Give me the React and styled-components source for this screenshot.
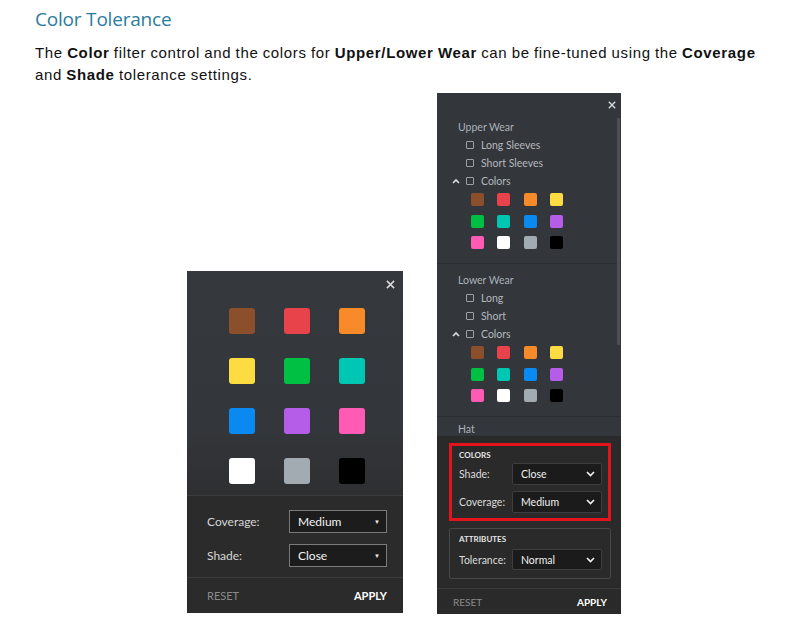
import React from "react";
import styled, { createGlobalStyle } from "styled-components";

const SWATCHES = [
  "#8b502b",
  "#e8424a",
  "#f88a2a",
  "#fcdc40",
  "#00c043",
  "#00c6b4",
  "#0a89f1",
  "#b55ce8",
  "#ff5bb5",
  "#ffffff",
  "#a2aab2",
  "#000000",
];

const GlobalStyle = createGlobalStyle`
  body {
    margin: 0;
    background: #ffffff;
  }
`;

const Page = styled.div`
  width: 808px;
  height: 624px;
  box-sizing: border-box;
  padding: 7px 0 0 35px;
  overflow: hidden;
`;

const Title = styled.h2`
  margin: 0;
  font-family: "Open Sans", "Liberation Sans", sans-serif;
  font-weight: 400;
  font-size: 19px;
  line-height: 24px;
  letter-spacing: -0.2px;
  color: #2b7c9d;
`;

const Lead = styled.p`
  margin: 11px 0 0;
  width: 732px;
  font-family: "Liberation Sans", Arial, sans-serif;
  font-size: 15px;
  line-height: 22px;
  letter-spacing: 0.65px;
  word-spacing: -0.5px;
  color: #111;

  b {
    font-weight: 700;
  }
`;

const Figures = styled.div`
  display: flex;
  align-items: flex-end;
  gap: 34px;
  margin: 7px 0 0 152px;
`;

/* ---------- shared bits ---------- */

const CloseIcon = ({ size = 9 }) => (
  <svg width={size} height={size} viewBox="0 0 10 10">
    <path d="M1 1L9 9M9 1L1 9" stroke="#d4d6d8" strokeWidth="1.8" />
  </svg>
);

const ChevronDown = () => (
  <svg width="9" height="6" viewBox="0 0 9 6">
    <path d="M1 1l3.5 3.5L8 1" fill="none" stroke="#f0f0f0" strokeWidth="1.7" />
  </svg>
);

const ChevronUp = () => (
  <svg width="8" height="6" viewBox="0 0 8 6">
    <path d="M1 5l3-3 3 3" fill="none" stroke="#d8dcdf" strokeWidth="1.7" />
  </svg>
);

const Swatch = styled.span`
  display: block;
  width: ${(p) => p.$size}px;
  height: ${(p) => p.$size}px;
  border-radius: ${(p) => (p.$size > 20 ? 3 : 2)}px;
  background: ${(p) => p.$color};
`;

const Footer = styled.div`
  display: flex;
  align-items: center;
  justify-content: space-between;
  height: ${(p) => p.$height}px;
  padding: 0 ${(p) => p.$right}px 0 ${(p) => p.$left}px;
  border-top: 1px solid #3b3b3b;
  font-family: Lato, "Liberation Sans", sans-serif;
  font-size: ${(p) => p.$font}px;
  text-transform: uppercase;
`;

const Reset = styled.span`
  color: #8a8a8a;
`;

const Apply = styled.span`
  color: #ffffff;
  font-weight: 700;
`;

/* ---------- compact colour picker ---------- */

const CompactPanel = styled.div`
  width: 216px;
  height: 342px;
  margin-bottom: 1px;
  display: flex;
  flex-direction: column;
  background: #2b2b2b;
`;

const CompactTop = styled.div`
  background: linear-gradient(#35383c, #33363a 70%, #2e2f31);
  padding-bottom: 11px;
`;

const CompactHead = styled.div`
  display: flex;
  justify-content: flex-end;
  align-items: flex-start;
  height: 37px;
  box-sizing: border-box;
  padding: 9px 8px 0;
`;

const BigGrid = styled.div`
  display: grid;
  grid-template-columns: repeat(3, 26px);
  column-gap: 29px;
  row-gap: 24px;
  justify-content: center;
  padding-left: 3px;
`;

const CompactControls = styled.div`
  display: flex;
  flex-direction: column;
  gap: 11px;
  padding: 14px 16px 10px 20px;
  border-top: 1px solid #3d3d3d;
`;

const CompactRow = styled.div`
  display: flex;
  align-items: center;
  justify-content: space-between;
  font-family: Lato, "Liberation Sans", sans-serif;
  font-size: 12px;
  color: #d6d6d6;
`;

const CompactSelect = styled.div`
  display: flex;
  align-items: center;
  justify-content: space-between;
  width: 98px;
  height: 23px;
  box-sizing: border-box;
  padding: 0 6px 0 8px;
  background: #1c1c1c;
  border: 1px solid #7a7a7a;
  color: #f2f2f2;
  font-size: 12px;

  &::after {
    content: "▼";
    font-size: 6px;
    color: #eeeeee;
  }
`;

const CompactPicker = () => (
  <CompactPanel>
    <CompactTop>
      <CompactHead>
        <CloseIcon size={9} />
      </CompactHead>
      <BigGrid>
        {SWATCHES.map((c) => (
          <Swatch key={c} $color={c} $size={26} />
        ))}
      </BigGrid>
    </CompactTop>
    <CompactControls>
      <CompactRow>
        Coverage:
        <CompactSelect>Medium</CompactSelect>
      </CompactRow>
      <CompactRow>
        Shade:
        <CompactSelect>Close</CompactSelect>
      </CompactRow>
    </CompactControls>
    <Footer $height={34} $left={20} $right={16} $font={11}>
      <Reset>Reset</Reset>
      <Apply>Apply</Apply>
    </Footer>
  </CompactPanel>
);

/* ---------- full filter panel ---------- */

const FilterPanel = styled.div`
  width: 184px;
  height: 521px;
  display: flex;
  flex-direction: column;
  background: #2a2a2a;
  font-family: Lato, "Liberation Sans", sans-serif;
`;

const ScrollArea = styled.div`
  position: relative;
  height: 343px;
  flex: none;
  overflow: hidden;
  background: #33363a;
`;

const ScrollThumb = styled.div`
  position: absolute;
  right: 1px;
  top: 25px;
  width: 3px;
  height: 227px;
  background: #4c4f54;
`;

const FilterHead = styled.div`
  display: flex;
  justify-content: flex-end;
  height: 24px;
  box-sizing: border-box;
  padding: 8px 5px 0;
`;

const Group = styled.div`
  padding: ${(p) => p.$top}px 0 14px 14px;
  border-bottom: 1px solid #2c2e31;
`;

const GroupTitle = styled.div`
  margin-left: 7px;
  font-size: 10.5px;
  line-height: ${(p) => p.$line || 18}px;
  color: #aab1b8;
`;

const Option = styled.div`
  display: flex;
  align-items: center;
  height: 18px;
  font-size: 10.5px;
  color: #b3b8bd;
`;

const Lead15 = styled.span`
  display: flex;
  align-items: center;
  width: 15px;
  padding-left: 1px;
  box-sizing: border-box;
`;

const Check = styled.span`
  width: 8px;
  height: 8px;
  box-sizing: border-box;
  border: 1px solid #9ba1a7;
  border-radius: 1px;
  margin-right: 7px;
`;

const SmallGrid = styled.div`
  display: grid;
  grid-template-columns: repeat(4, 13px);
  column-gap: 13.3px;
  row-gap: 8.5px;
  margin: ${(p) => p.$top}px 0 0 20px;
`;

const Settings = styled.div`
  display: flex;
  flex-direction: column;
  gap: 7px;
  padding: 6px 10px 9px 12px;
  border-top: 1px solid #26282a;
`;

const Fieldset = styled.div`
  display: grid;
  grid-template-columns: 53px 90px;
  align-items: center;
  row-gap: ${(p) => p.$gap}px;
  border: ${(p) => (p.$marked ? "3px solid #e5141c" : "1px solid #474747")};
  border-radius: ${(p) => (p.$marked ? 0 : 2)}px;
  padding: ${(p) => p.$pad};
`;

const Legend = styled.div`
  grid-column: 1 / -1;
  font-size: 8px;
  line-height: 12px;
  font-weight: 700;
  color: #e4e4e4;
  text-transform: uppercase;
  margin-bottom: ${(p) => p.$space}px;
`;

const FieldLabel = styled.span`
  font-size: 10.5px;
  color: #dadada;
  white-space: nowrap;
`;

const FieldSelect = styled.div`
  display: flex;
  align-items: center;
  justify-content: space-between;
  height: ${(p) => p.$h}px;
  box-sizing: border-box;
  padding: 0 6px 0 8px;
  background: #1b1b1b;
  border: 1px solid #3e3e3e;
  border-radius: 2px;
  font-size: 10.5px;
  color: #f0f0f0;
`;

const WearGroup = ({ title, options, top }) => (
  <Group $top={top}>
    <GroupTitle>{title}</GroupTitle>
    {options.map((o) => (
      <Option key={o}>
        <Lead15 />
        <Check />
        {o}
      </Option>
    ))}
    <Option>
      <Lead15>
        <ChevronUp />
      </Lead15>
      <Check />
      Colors
    </Option>
    <SmallGrid $top={3}>
      {SWATCHES.map((c) => (
        <Swatch key={c} $color={c} $size={13} />
      ))}
    </SmallGrid>
  </Group>
);

const Field = ({ label, value, h }) => (
  <>
    <FieldLabel>{label}</FieldLabel>
    <FieldSelect $h={h}>
      {value}
      <ChevronDown />
    </FieldSelect>
  </>
);

const FilterPicker = () => (
  <FilterPanel>
    <ScrollArea>
      <FilterHead>
        <CloseIcon size={8} />
      </FilterHead>
      <WearGroup
        title="Upper Wear"
        options={["Long Sleeves", "Short Sleeves"]}
        top={1}
      />
      <WearGroup title="Lower Wear" options={["Long", "Short"]} top={7} />
      <Group $top={6}>
        <GroupTitle $line={13}>Hat</GroupTitle>
      </Group>
      <ScrollThumb />
    </ScrollArea>
    <Settings>
      <Fieldset $marked $gap={6} $pad="3px 6px 5px 7px">
        <Legend $space={-4}>Colors</Legend>
        <Field label="Shade:" value="Close" h={22} />
        <Field label="Coverage:" value="Medium" h={22} />
      </Fieldset>
      <Fieldset $gap={4} $pad="4px 8px 8px 9px">
        <Legend $space={0}>Attributes</Legend>
        <Field label="Tolerance:" value="Normal" h={21} />
      </Fieldset>
    </Settings>
    <Footer $height={26} $left={16} $right={14} $font={10}>
      <Reset>Reset</Reset>
      <Apply>Apply</Apply>
    </Footer>
  </FilterPanel>
);

const App = () => (
  <>
    <GlobalStyle />
    <Page>
      <Title>Color Tolerance</Title>
      <Lead>
        The <b>Color</b> filter control and the colors for{" "}
        <b>Upper/Lower Wear</b> can be fine-tuned using the <b>Coverage</b>{" "}
        and <b>Shade</b> tolerance settings.
      </Lead>
      <Figures>
        <CompactPicker />
        <FilterPicker />
      </Figures>
    </Page>
  </>
);

export default App;
